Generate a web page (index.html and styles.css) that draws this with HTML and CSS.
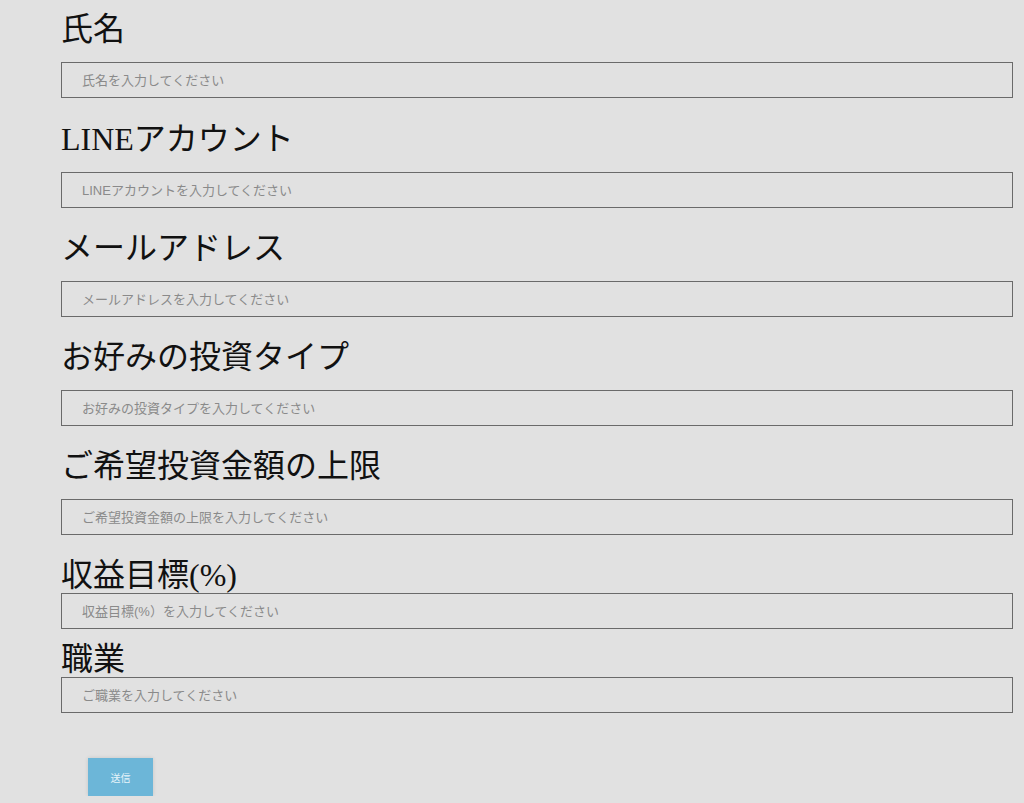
FILE: index.html
```html
<!DOCTYPE html>
<html lang="ja">
<head>
    <meta charset="UTF-8">
    <meta name="viewport" content="width=device-width, initial-scale=1.0">
    <title>お問い合わせフォーム</title>
    <link rel="stylesheet" href="styles.css">
</head>
<body>
    <form class="form">
        <label class="label label-first" for="name">氏名</label>
        <input class="field" type="text" id="name" placeholder="氏名を入力してください">

        <label class="label label-second" for="line">LINEアカウント</label>
        <input class="field" type="text" id="line" placeholder="LINEアカウントを入力してください">

        <label class="label" for="mail">メールアドレス</label>
        <input class="field" type="email" id="mail" placeholder="メールアドレスを入力してください">

        <label class="label" for="type">お好みの投資タイプ</label>
        <input class="field" type="text" id="type" placeholder="お好みの投資タイプを入力してください">

        <label class="label" for="limit">ご希望投資金額の上限</label>
        <input class="field" type="text" id="limit" placeholder="ご希望投資金額の上限を入力してください">

        <label class="label label-tight" for="goal">収益目標(%)</label>
        <input class="field" type="text" id="goal" placeholder="収益目標(%）を入力してください">

        <label class="label label-tighter" for="job">職業</label>
        <input class="field" type="text" id="job" placeholder="ご職業を入力してください">

        <button class="submit" type="button">送信</button>
    </form>
</body>
</html>
```

FILE: styles.css
```css
/* 全体 */
body {
    margin: 0;
    padding: 0;
    background-color: #e1e1e1;
    font-family: "Liberation Sans", "Noto Sans CJK JP", sans-serif;
    color: #111111;
}
.form {
    display: flex;
    flex-direction: column;
    align-items: flex-start;
    padding: 11px 11px 0 61px;
}
.label {
    display: block;
    font-family: "Liberation Serif", "Noto Sans CJK JP", serif;
    font-size: 32px;
    line-height: 36px;
    font-weight: normal;
    margin: 22px 0 15px 0;
}
.label-first {
    margin-top: 0;
}
.label-second {
    margin-top: 23px;
}
.label-tight {
    margin-bottom: 0;
}
.label-tighter {
    margin-top: 12px;
    margin-bottom: 0;
}
.field {
    box-sizing: border-box;
    width: 952px;
    height: 36px;
    margin: 0;
    padding: 0 20px;
    border: 1px solid #6a6a6a;
    background-color: #e1e1e1;
    font-family: "Liberation Sans", "Noto Sans CJK JP", sans-serif;
    font-size: 13px;
    color: #333333;
}
.field::placeholder {
    color: #8a8a8a;
}
.submit {
    margin: 45px 0 0 27px;
    width: 65px;
    height: 38px;
    border: none;
    background-color: #6cb6d8;
    color: #e8f4fa;
    font-size: 10px;
    font-family: "Liberation Sans", "Noto Sans CJK JP", sans-serif;
    box-shadow: 0 0 4px rgba(0, 0, 0, 0.12);
    cursor: pointer;
}
```
